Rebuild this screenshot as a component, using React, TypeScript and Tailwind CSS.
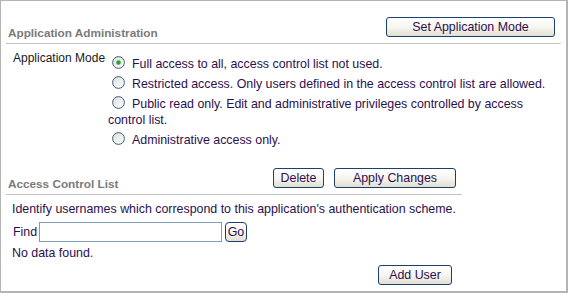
import React from "react";

const textColor = "text-[#2b1050]";

function Btn({ label, className }: { label: string; className: string }) {
  return (
    <button
      type="button"
      className={`h-[20px] rounded-[3px] border border-[#1c3f6e] bg-linear-to-b from-white via-[#f7f6f1] to-[#e2ded2] text-[12.4px] leading-none text-[#2b1050] ${className}`}
    >
      {label}
    </button>
  );
}

function Radio({ checked = false }: { checked?: boolean }) {
  return (
    <svg
      width="13"
      height="13"
      viewBox="0 0 13 13"
      className="inline-block align-[-1px] ml-[4px] mr-[7px]"
    >
      <defs>
        <linearGradient id="radioFill" x1="0" y1="0" x2="1" y2="1">
          <stop offset="0" stopColor="#dcdcd6" />
          <stop offset="1" stopColor="#ffffff" />
        </linearGradient>
      </defs>
      <circle cx="6.5" cy="6.5" r="5.9" fill="url(#radioFill)" stroke="#3d5f84" strokeWidth="1" />
      {checked && <circle cx="6.5" cy="6.5" r="2.3" fill="#2aa52a" />}
    </svg>
  );
}

const modes = [
  { label: "Full access to all, access control list not used.", checked: true },
  { label: "Restricted access. Only users defined in the access control list are allowed.", checked: false },
  { label: "Public read only. Edit and administrative privileges controlled by access control list.", checked: false },
  { label: "Administrative access only.", checked: false },
];

export default function App() {
  return (
    <div className="w-[568px] h-[293px] bg-white border-t border-l border-r-2 border-b-2 border-[#b4b4b4] font-['Liberation_Sans',Arial,sans-serif] text-[12.4px]">
      {/* Application Administration */}
      <div className="mt-[16px] ml-[5px] mr-[5px] h-[27px] flex items-start justify-between border-b border-[#c4c4c4]">
        <h2 className="self-end pl-[2px] pb-[3px] leading-[14px] text-[11.75px] font-bold text-[#7b7b7b]">
          Application Administration
        </h2>
        <Btn label="Set Application Mode" className="w-[169px] mr-[6px]" />
      </div>

      <div className="mt-[6px] flex">
        <div className="w-[107px] shrink-0 pl-[12px] leading-[16px] text-[12px] whitespace-nowrap text-[#1a1a1a]">
          Application Mode
        </div>
        <div className={`w-[450px] pt-[4px] ${textColor}`}>
          {modes.map((m) => (
            <div key={m.label} className="py-[2px] leading-[16px]">
              <Radio checked={m.checked} />
              {m.label}
            </div>
          ))}
        </div>
      </div>

      {/* Access Control List */}
      <div className="mt-[18px] ml-[5px] w-[456px] h-[27px] flex items-start justify-between border-b border-[#c4c4c4]">
        <h2 className="self-end pl-[2px] pb-[3px] leading-[14px] text-[11.75px] font-bold text-[#7b7b7b]">
          Access Control List
        </h2>
        <div className="flex gap-[10px] mr-[6px]">
          <Btn label="Delete" className="w-[51px]" />
          <Btn label="Apply Changes" className="w-[122px]" />
        </div>
      </div>

      <div className={`mt-[6px] pl-[11px] leading-[16px] ${textColor}`}>
        Identify usernames which correspond to this application's authentication scheme.
      </div>

      <div className={`mt-[5px] h-[20px] flex items-center ${textColor}`}>
        <label className="w-[38px] pl-[12px]">Find</label>
        <input type="text" className="w-[183px] h-[20px] border border-[#7f9db9] bg-white outline-none" />
        <Btn label="Go" className="ml-[3px] w-[22px] rounded-[4px]" />
      </div>

      <div className={`mt-[3px] pl-[11px] leading-[16px] ${textColor}`}>No data found.</div>

      <div className="mt-[4px]">
        <Btn label="Add User" className="ml-[377px] w-[74px]" />
      </div>
    </div>
  );
}
